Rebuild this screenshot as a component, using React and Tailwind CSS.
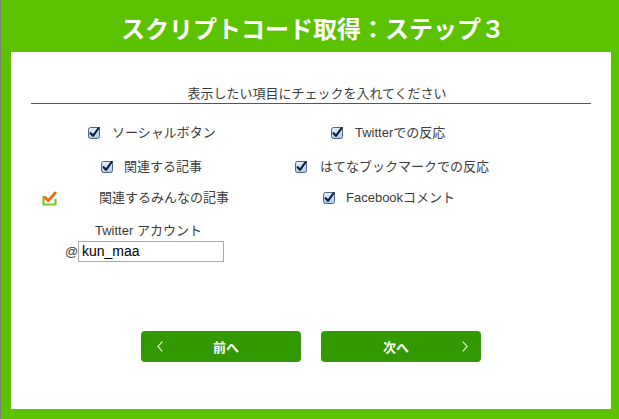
import React from "react";

const jp = { fontFamily: '"Liberation Sans", "Noto Sans CJK JP", sans-serif' };

function Check() {
  return (
    <svg width="12" height="12" viewBox="0 0 12 12" className="shrink-0">
      <defs>
        <linearGradient id="cbg" x1="0" y1="0" x2="0" y2="1">
          <stop offset="0" stopColor="#e6f0fb" />
          <stop offset="1" stopColor="#a9c9ee" />
        </linearGradient>
      </defs>
      <rect x="0.5" y="0.5" width="11" height="11" rx="2" fill="url(#cbg)" stroke="#4d6485" />
      <path d="M2.6 6.2 L5 8.8 L10.8 0.8" fill="none" stroke="#0f1e3a" strokeWidth="2.1" strokeLinecap="round" strokeLinejoin="round" />
    </svg>
  );
}

function OrangeCheck() {
  return (
    <svg width="15" height="15" viewBox="0 0 15 15" className="shrink-0">
      <path d="M1.5 5 V13.5 H13.5 V8" fill="none" stroke="#7cc42c" strokeWidth="2.2" strokeLinejoin="round" />
      <path d="M3.2 6.5 L6.3 9.8 L13.2 2" fill="none" stroke="#f46a0a" strokeWidth="2.8" strokeLinecap="round" strokeLinejoin="round" />
    </svg>
  );
}

function Item({ children, gap = "ml-[12px]" }) {
  return (
    <div className="flex items-center">
      <Check />
      <span className={`${gap} text-[13px] leading-[16px] text-[#3c3c3c] whitespace-nowrap`}>{children}</span>
    </div>
  );
}

export default function App() {
  return (
    <div className="w-[619px] h-[419px] bg-[#5bc200] border-l border-[#7d7d7d] flex flex-col" style={jp}>
      <div className="h-[52px] flex items-center justify-center pt-[3px] pl-[6px]">
        <h1 className="text-white font-bold text-[24px] leading-[30px]" style={{ fontFamily: '"Noto Sans CJK JP", sans-serif' }}>
          スクリプトコード取得：ステップ３
        </h1>
      </div>
      <div className="ml-[10px] mr-[8px] mb-[10px] flex-1 bg-white flex flex-col">
        <div className="pt-[34px] pl-[12px] text-center text-[13px] leading-[16px] text-[#3c3c3c]">
          表示したい項目にチェックを入れてください
        </div>
        <div className="mx-[20px] mt-px h-px bg-[#555]" />

        <div className="mt-[19px] h-[20px] flex items-center">
          <div className="w-[320px] pl-[77px]"><Item>ソーシャルボタン</Item></div>
          <Item>Twitterでの反応</Item>
        </div>
        <div className="mt-[14px] h-[20px] flex items-center">
          <div className="w-[284px] pl-[90px]"><Item gap="ml-[11px]">関連する記事</Item></div>
          <Item gap="ml-[13px]">はてなブックマークでの反応</Item>
        </div>
        <div className="mt-[11px] h-[20px] flex items-center">
          <div className="w-[312px] pl-[31px] flex items-center">
            <OrangeCheck />
            <span className="ml-[42px] text-[13px] leading-[16px] text-[#3c3c3c] whitespace-nowrap">関連するみんなの記事</span>
          </div>
          <Item gap="ml-[11px]">Facebookコメント</Item>
        </div>

        <div className="mt-[15px] pl-[84px] text-[13px] leading-[16px] text-[#3c3c3c] whitespace-nowrap">
          Twitter アカウント
        </div>
        <div className="mt-[2px] pl-[54px] flex items-center">
          <span className="w-[13px] text-[13px] leading-[16px] text-[#3c3c3c]">@</span>
          <div className="w-[146px] h-[21px] border border-[#aaaaaa] flex items-center pl-[3px] text-[14px] text-black">
            kun_maa
          </div>
        </div>

        <div className="mt-[69px] flex justify-center gap-[20px]">
          <button className="w-[160px] h-[31px] rounded-[4px] bg-[#339900] relative flex items-center justify-center text-white font-bold text-[13px]" style={{ fontFamily: '"Noto Sans CJK JP", sans-serif' }}>
            <svg width="6" height="11" viewBox="0 0 6 11" className="absolute left-[16px] top-[10px]">
              <path d="M5.3 0.6 L0.9 5.5 L5.3 10.4" fill="none" stroke="white" strokeWidth="1.1" />
            </svg>
            <span className="ml-[10px]">前へ</span>
          </button>
          <button className="w-[160px] h-[31px] rounded-[4px] bg-[#339900] relative flex items-center justify-center text-white font-bold text-[13px]" style={{ fontFamily: '"Noto Sans CJK JP", sans-serif' }}>
            <span className="mr-[10px]">次へ</span>
            <svg width="6" height="11" viewBox="0 0 6 11" className="absolute right-[13px] top-[10px]">
              <path d="M0.7 0.6 L5.1 5.5 L0.7 10.4" fill="none" stroke="white" strokeWidth="1.1" />
            </svg>
          </button>
        </div>
      </div>
    </div>
  );
}
